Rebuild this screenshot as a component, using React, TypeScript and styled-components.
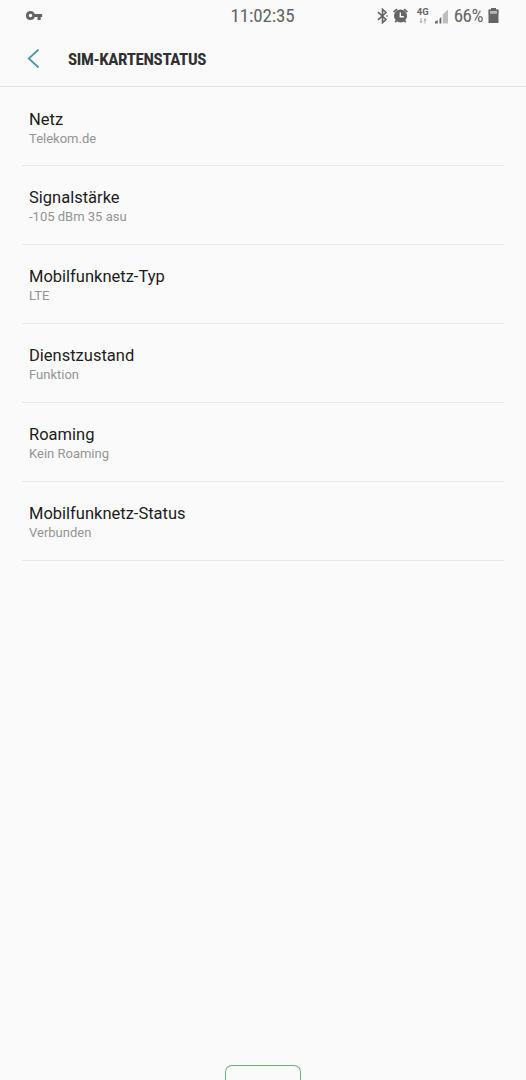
import React from 'react';
import styled, { createGlobalStyle } from 'styled-components';

const Global = createGlobalStyle`
  * { box-sizing: border-box; }
  body { margin: 0; background: #fafafa; font-family: Roboto, sans-serif; }
`;
const Screen = styled.main`
  width: 526px; height: 1080px; background: #fafafa; display: flex; flex-direction: column; overflow: hidden;
`;
const StatusBar = styled.header`
  height: 32px; flex: none; display: grid; grid-template-columns: 1fr auto 1fr; align-items: center;
  padding: 0 27px 0 26px; color: #646464;
`;
const Clock = styled.time`
  font-family: 'Roboto Condensed', Roboto, sans-serif; font-stretch: 75%;
  font-size: 19px; line-height: 32px; letter-spacing: -0.15px;
`;
const StatusIcons = styled.div`
  display: flex; align-items: center; justify-content: flex-end;
  svg { flex: none; }
`;
const Battery = styled.span`
  font-family: 'Roboto Condensed', Roboto, sans-serif; font-stretch: 75%;
  font-size: 19px; line-height: 32px; margin: 0 5px 0 6px; letter-spacing: -0.5px;
`;
const Network = styled.span`
  width: 14px; height: 20px; margin: 0 5px 0 8px; display: flex; flex-direction: column; align-items: center;
  font-size: 9.5px; line-height: 11px; font-weight: 700;
  svg { margin-top: 1px; }
`;
const TitleBar = styled.div`
  height: 55px; flex: none; display: flex; align-items: center; padding-left: 26px; border-bottom: 1px solid #e4e4e4;
`;
const Title = styled.h1`
  margin: 0 0 0 28px; font-family: 'Roboto Condensed', Roboto, sans-serif; font-stretch: 75%;
  font-size: 17px; font-weight: 700; letter-spacing: -0.37px; color: #303030;
`;
const List = styled.ul`
  margin: 0; padding: 0.4px 22px 0; list-style: none; flex: 1;
`;
const Row = styled.li`
  height: 78.9px; border-bottom: 1px solid #e8e8e8; padding: 21.2px 7px 0;
`;
const Label = styled.div`
  font-size: 16.5px; line-height: 21px; color: #1c1c1c;
`;
const Value = styled.div`
  font-size: 13px; line-height: 18px; color: #949494;
`;
const HomeOutline = styled.div`
  width: 76px; height: 15px; flex: none; align-self: center; border: 1px solid #6fae78; border-bottom: 0; border-radius: 7px 7px 0 0;
`;

const entries = [
  ['Netz', 'Telekom.de'],
  ['Signalstärke', '-105 dBm 35 asu'],
  ['Mobilfunknetz-Typ', 'LTE'],
  ['Dienstzustand', 'Funktion'],
  ['Roaming', 'Kein Roaming'],
  ['Mobilfunknetz-Status', 'Verbunden'],
];

const KeyIcon = () => (
  <svg width="17" height="10" viewBox="0 0 17 10">
    <path fillRule="evenodd" d="M4.500 0a4.500 4.500 0 1 0 4.250 6H11.500V9h3.200V6H16.200V3H8.750A4.500 4.500 0 0 0 4.500 0Zm0 2.800a1.700 1.700 0 1 1 0 3.400 1.700 1.700 0 0 1 0-3.400Z" fill="#646464" />
  </svg>
);

const BluetoothIcon = () => (
  <svg width="11" height="16" viewBox="0 0 11 16">
    <path d="M1 4.200 9 11.500 5.500 14.700V1.300L9 4.500 1 11.800" fill="none" stroke="#646464" strokeWidth="1.600" />
    <path d="M9 8l1-1L11 8 10 9Z" fill="#646464" />
  </svg>
);

const AlarmGlyph = styled.svg`
  margin-left: 5px;
`;
const AlarmIcon = () => (
  <AlarmGlyph width="15" height="16" viewBox="0 0 15 16">
    <circle cx="7.500" cy="8" r="6.500" fill="#646464" />
    <path d="M.600 4 4 1.200M14.400 4 11 1.200M3.500 12.500l-1.200 1.700M11.500 12.500l1.200 1.700" stroke="#646464" strokeWidth="1.700" fill="none" />
    <path d="M7.300 4.500v4.200h3.500" fill="none" stroke="#fafafa" strokeWidth="1.400" />
  </AlarmGlyph>
);

const DataArrows = () => (
  <svg width="8" height="6" viewBox="0 0 8 6">
    <path d="M1.500 0v3H.500L2 5.500 3.500 3H2.500V0ZM5.500 5.500V2.500H4.500L6 0l1.500 2.500H6.500v3Z" fill="#aaaaaa" />
  </svg>
);

const SignalIcon = () => (
  <svg width="13" height="15" viewBox="0 0 13 15">
    <path d="M0 14.500v-1.700L2.700 11v3.500ZM4.500 14.500V9.700L6.300 8v6.500Z" fill="#646464" />
    <path d="M7.800 14.500V5.500L13 .500v14Z" fill="#bdbdbd" />
  </svg>
);

const BatteryIcon = () => (
  <svg width="11" height="16" viewBox="0 0 11 16">
    <path d="M3 0h5v1.500h2.500V6H.500V1.500H3Z" fill="#b9b9b9" />
    <path d="M.500 15V1.500H3V0h5v1.500h2.500V15ZM2 3v2.700h7V3Z" fillRule="evenodd" fill="#646464" />
  </svg>
);

export default function App() {
  return (
    <Screen>
      <Global />
      <StatusBar>
        <KeyIcon />
        <Clock>11:02:35</Clock>
        <StatusIcons>
          <BluetoothIcon />
          <AlarmIcon />
          <Network>4G<DataArrows /></Network>
          <SignalIcon />
          <Battery>66%</Battery>
          <BatteryIcon />
        </StatusIcons>
      </StatusBar>
      <TitleBar>
        <svg width="14" height="20" viewBox="0 0 14 20"><path d="M12.500.500 2.800 9.500l9.700 9" fill="none" stroke="#4a96b2" strokeWidth="1.800" /></svg>
        <Title>SIM-KARTENSTATUS</Title>
      </TitleBar>
      <List>
        {entries.map(([label, value]) => (
          <Row key={label}><Label>{label}</Label><Value>{value}</Value></Row>
        ))}
      </List>
      <HomeOutline />
    </Screen>
  );
}
